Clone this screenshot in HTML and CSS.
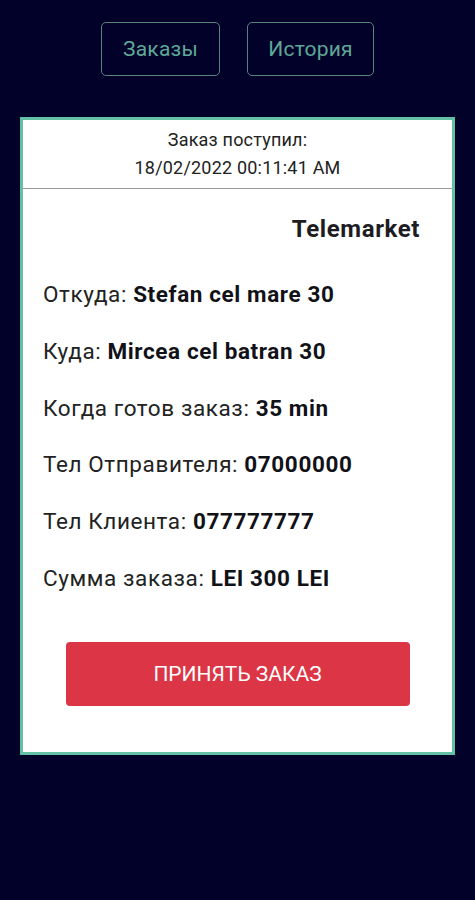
FILE: index.html
```html
<!DOCTYPE html>
<html lang="ru">
<head>
  <meta charset="UTF-8">
  <meta name="viewport" content="width=device-width, initial-scale=1.0">
  <title>Заказы</title>
  <link rel="stylesheet" href="styles.css">
</head>
<body>
  <!-- Top navigation -->
  <nav class="nav">
    <button class="nav-btn nav-orders">Заказы</button>
    <button class="nav-btn nav-history">История</button>
  </nav>

  <!-- Order card -->
  <div class="order-card">
    <div class="order-head">
      <p>Заказ поступил:</p>
      <p>18/02/2022 00:11:41 AM</p>
    </div>
    <div class="order-body">
      <div class="shop">Telemarket</div>
      <ul class="order-info">
        <li>Откуда: <b>Stefan cel mare 30</b></li>
        <li>Куда: <b>Mircea cel batran 30</b></li>
        <li>Когда готов заказ: <b>35 min</b></li>
        <li>Тел Отправителя: <b>07000000</b></li>
        <li>Тел Клиента: <b>077777777</b></li>
        <li>Сумма заказа: <b>LEI 300 LEI</b></li>
      </ul>
      <button class="accept-btn">ПРИНЯТЬ ЗАКАЗ</button>
    </div>
  </div>
</body>
</html>
```

FILE: styles.css
```css
/* Reset styles */
* {
  margin: 0;
  padding: 0;
  box-sizing: border-box;
}

body {
  font-family: Roboto, "Noto Sans", Arial, sans-serif;
  background-color: #01012a;
  height: 100vh;
  overflow: hidden;
}

/* Top navigation */
.nav {
  display: flex;
  justify-content: center;
  gap: 27px;
  padding-top: 22px;
}

.nav-btn {
  height: 54px;
  background: transparent;
  border: 1.5px solid #56847a;
  border-radius: 5px;
  color: #5fa896;
  font-family: inherit;
  font-size: 21px;
  letter-spacing: 0.2px;
  cursor: pointer;
}

.nav-orders {
  width: 119px;
}

.nav-history {
  width: 127px;
}

/* Order card */
.order-card {
  margin: 41px 20px 0;
  height: 638px;
  background-color: #fff;
  border: 3px solid #62c1a4;
}

.order-head {
  height: 69px;
  padding-top: 6px;
  text-align: center;
  font-size: 18px;
  letter-spacing: 0.2px;
  line-height: 28px;
  color: #222;
  border-bottom: 1px solid #9a9a9a;
}

.order-body {
  padding: 0 20px;
}

.shop {
  padding: 26px 12px 0 0;
  text-align: right;
  font-size: 24px;
  line-height: 28px;
  letter-spacing: 0.6px;
  font-weight: bold;
  color: #1c1c22;
}

.order-info {
  list-style: none;
  margin-top: 23px;
}

.order-info li {
  font-size: 22.5px;
  letter-spacing: 0.6px;
  line-height: 56.8px;
  color: #222;
}

.order-info b {
  color: #111118;
}

.accept-btn {
  display: block;
  width: 344px;
  height: 64px;
  margin: 35px auto 0;
  background-color: #dc3545;
  border: none;
  border-radius: 4px;
  color: #fff;
  font-family: inherit;
  font-size: 21px;
  cursor: pointer;
}
```
